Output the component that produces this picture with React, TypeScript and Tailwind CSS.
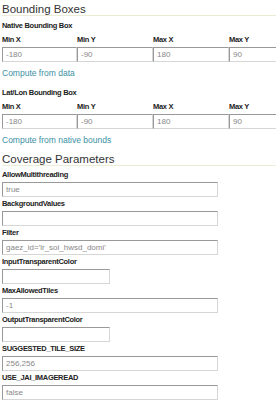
const fieldBox =
   "h-[15px] border border-t-[#999] border-l-[#999] border-r-[#d6d6d6] border-b-[#d6d6d6] bg-white px-[3px] text-[8px] leading-[13px] text-[#888]"

const labelText = "text-[7.5px] font-bold leading-[9px] tracking-[-0.3px] text-[#222]"

function Heading({ children }: { children: string }) {
   return (
      <h2 className="border-b border-[#ebebd6] text-[11.5px] leading-[12px] text-[#333]">
         {children}
      </h2>
   )
}

function BoundsTable({ title, link }: { title: string; link: string }) {
   const cols = [
      { label: "Min X", value: "-180" },
      { label: "Min Y", value: "-90" },
      { label: "Max X", value: "180" },
      { label: "Max Y", value: "90" },
   ]
   return (
      <div>
         <h3 className={labelText}>{title}</h3>
         <div className="mt-[5px] grid w-[304px] grid-cols-[75px_76px_76px_76px]">
            {cols.map((c) => (
               <div key={c.label}>
                  <div className={labelText}>{c.label}</div>
                  <div className={`mt-[3px] ${fieldBox}`}>{c.value}</div>
               </div>
            ))}
         </div>
         <a className="mt-[6px] block text-[8.5px] leading-[10px] text-[#3a90a4]">{link}</a>
      </div>
   )
}

const params = [
   { name: "AllowMultithreading", value: "true", short: false },
   { name: "BackgroundValues", value: "", short: false },
   { name: "Filter", value: "gaez_id='lr_soi_hwsd_domi'", short: false },
   { name: "InputTransparentColor", value: "", short: true },
   { name: "MaxAllowedTiles", value: "-1", short: false },
   { name: "OutputTransparentColor", value: "", short: true },
   { name: "SUGGESTED_TILE_SIZE", value: "256,256", short: false },
   { name: "USE_JAI_IMAGEREAD", value: "false", short: false },
]

export default function App() {
   return (
      <div
         className="h-[400px] w-[276px] overflow-hidden bg-white pl-[2px] pt-[3px]"
         style={{ fontFamily: '"Liberation Sans", Arial, sans-serif' }}
      >
         <Heading>Bounding Boxes</Heading>
         <div className="mt-[5px]">
            <BoundsTable title="Native Bounding Box" link="Compute from data" />
         </div>
         <div className="mt-[10px]">
            <BoundsTable title="Lat/Lon Bounding Box" link="Compute from native bounds" />
         </div>
         <div className="mt-[8px]">
            <Heading>Coverage Parameters</Heading>
         </div>
         <div className="mt-[4px] flex flex-col">
            {params.map((p) => (
               <div key={p.name} className="h-[29px]">
                  <div className="text-[7.5px] font-bold leading-[10px] tracking-[-0.3px] text-[#222]">
                     {p.name}
                  </div>
                  <div className={`mt-[2px] ${p.short ? "w-[108px]" : "w-[216px]"} ${fieldBox}`}>
                     {p.value}
                  </div>
               </div>
            ))}
         </div>
      </div>
   )
}
